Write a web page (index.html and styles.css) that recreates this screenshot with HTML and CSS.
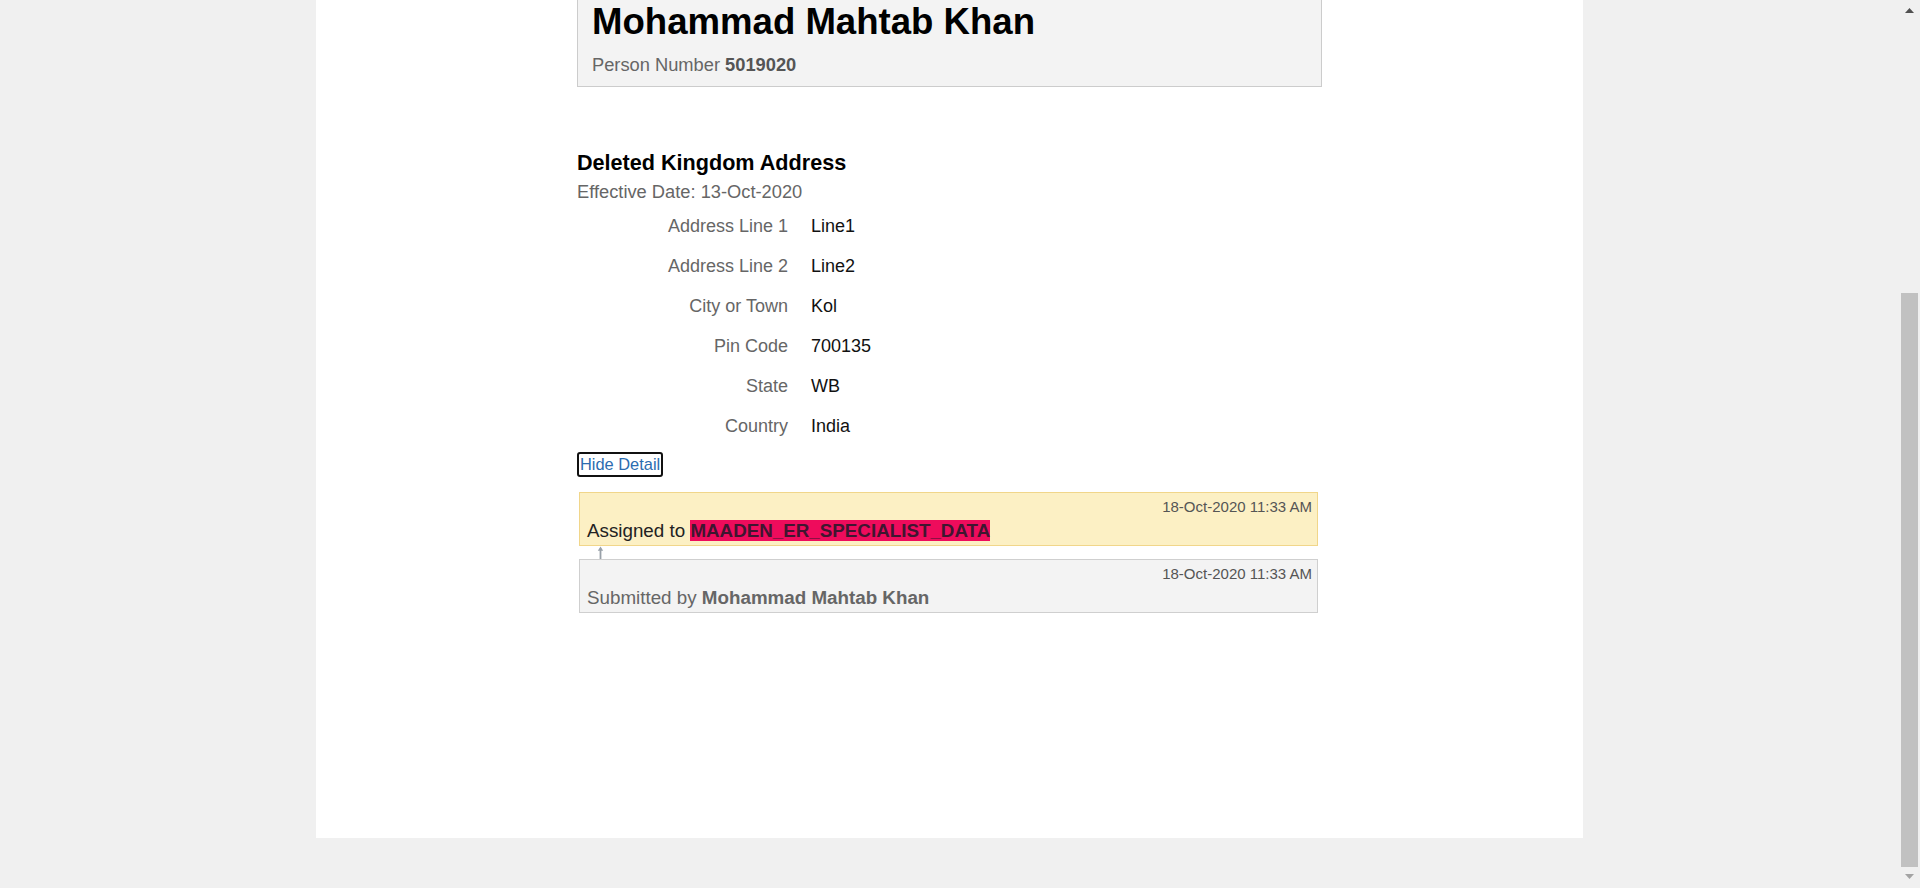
FILE: index.html
```html
<!DOCTYPE html>
<html lang="en">
<head>
<meta charset="utf-8">
<title>Deleted Kingdom Address</title>
<link rel="stylesheet" href="styles.css">
</head>
<body>
<div class="screen">
  <div class="main">
    <div class="panel">
      <div class="content">
        <div class="person-card">
          <h1 class="person-name">Mohammad Mahtab Khan</h1>
          <p class="person-number">Person Number <b>5019020</b></p>
        </div>

        <section class="address">
          <h2 class="address-title">Deleted Kingdom Address</h2>
          <div class="effective">Effective Date: 13-Oct-2020</div>
          <dl class="fields">
            <dt>Address Line 1</dt><dd>Line1</dd>
            <dt>Address Line 2</dt><dd>Line2</dd>
            <dt>City or Town</dt><dd>Kol</dd>
            <dt>Pin Code</dt><dd>700135</dd>
            <dt>State</dt><dd>WB</dd>
            <dt>Country</dt><dd>India</dd>
          </dl>
          <a class="hide-detail" href="#">Hide Detail</a>
        </section>

        <div class="timeline">
          <div class="event event-current">
            <div class="event-time">18-Oct-2020 11:33 AM</div>
            <div class="event-text">Assigned to <span class="assignee">MAADEN_ER_SPECIALIST_DATA</span></div>
          </div>
          <div class="connector">
            <svg width="7" height="13" viewBox="0 0 7 13"><path d="M3.5 2.5 V13" stroke="#98a0a8" stroke-width="1.8" fill="none"/><path d="M0.8 4.8 L3.5 0.5 L6.2 4.8 Z" fill="#98a0a8"/></svg>
          </div>
          <div class="event event-past">
            <div class="event-time">18-Oct-2020 11:33 AM</div>
            <div class="event-text">Submitted by <b>Mohammad Mahtab Khan</b></div>
          </div>
        </div>
      </div>
    </div>
  </div>
  <div class="scrollbar">
    <svg class="arrow" width="9" height="5" viewBox="0 0 9 5"><polygon points="0,5 4.5,0 9,5" fill="#505050"/></svg>
    <div class="track"><div class="thumb"></div></div>
    <svg class="arrow" width="9" height="5" viewBox="0 0 9 5"><polygon points="0,0 4.5,5 9,0" fill="#a3a3a3"/></svg>
  </div>
</div>
</body>
</html>
```

FILE: styles.css
```css
html, body {
  margin: 0;
  padding: 0;
  height: 888px;
  overflow: hidden;
  background: #f0f0f0;
  font-family: "Liberation Sans", Arial, sans-serif;
}

.screen {
  display: flex;
  height: 888px;
}

.main {
  flex: 1;
  overflow: hidden;
}

.panel {
  width: 1267px;
  height: 838px;
  margin: 0 auto;
  background: #fff;
}

.content {
  width: 745px;
  margin: 0 auto;
}

.person-card {
  background: #f3f3f3;
  border: 1px solid #cccccc;
  border-top: 0;
  padding: 0 14px 9px;
}

.person-name {
  margin: 0;
  font-size: 36.6px;
  line-height: 43px;
  font-weight: bold;
  color: #000;
}

.person-number {
  margin: 10px 0 0;
  font-size: 18.3px;
  line-height: 24px;
  color: #666;
}

.person-number b {
  color: #555;
}

.address {
  margin-top: 63.2px;
}

.address-title {
  margin: 0;
  font-size: 21.6px;
  line-height: 26px;
  font-weight: bold;
  color: #000;
}

.effective {
  margin-top: 4px;
  font-size: 18.3px;
  line-height: 24px;
  color: #666;
}

.fields {
  display: grid;
  grid-template-columns: 211px 1fr;
  column-gap: 23px;
  margin: 1.5px 0 0;
  font-size: 18px;
  line-height: 40px;
}

.fields dt {
  text-align: right;
  color: #666;
}

.fields dd {
  margin: 0;
  color: #111;
}

.hide-detail {
  display: inline-block;
  margin-top: 6.3px;
  padding: 0 1px;
  border: 2px solid #111;
  border-radius: 3px;
  font-size: 16.4px;
  line-height: 21px;
  color: #2b6cb0;
  text-decoration: none;
}

.timeline {
  margin: 14.8px 4px 0 2px;
}

.event {
  padding: 4px 5px 2px 7px;
  border: 1px solid;
}

.event-current {
  background: #fcf0c4;
  border-color: #f1d68a;
}

.event-past {
  background: #f3f3f3;
  border-color: #cfcfcf;
}

.event-time {
  text-align: right;
  font-size: 15px;
  line-height: 20px;
  color: #555;
}

.event-text {
  margin-top: 2px;
  font-size: 18.8px;
  line-height: 24px;
}

.event-current .event-text {
  color: #222;
}

.event-past .event-text {
  color: #666;
}

.assignee {
  background: #ee0c5c;
  color: #3f1630;
  font-weight: bold;
}

.connector {
  display: flex;
  height: 13px;
  padding-left: 18px;
}

.scrollbar {
  width: 21px;
  display: flex;
  flex-direction: column;
  align-items: center;
  background: #f0f0f0;
}

.scrollbar .arrow {
  flex: none;
  margin: 8px 0 3px;
}

.scrollbar .arrow:last-child {
  margin: 7px 0 9px;
}

.track {
  flex: 1;
  width: 17px;
  display: flex;
  flex-direction: column;
  justify-content: flex-end;
}

.thumb {
  height: 574px;
  background: #c1c1c1;
}
```
